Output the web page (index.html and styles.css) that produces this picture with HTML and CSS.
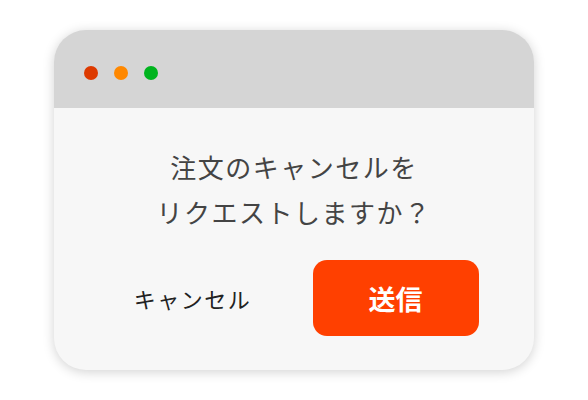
FILE: index.html
```html
<!DOCTYPE html>
<html lang="ja">
<head>
<meta charset="utf-8">
<link rel="stylesheet" href="styles.css">
</head>
<body>
<div class="window">
  <div class="titlebar">
    <span class="dot red"></span>
    <span class="dot orange"></span>
    <span class="dot green"></span>
  </div>
  <div class="content">
    <p class="message">注文のキャンセルを<br>リクエストしますか？</p>
    <div class="actions">
      <button class="btn cancel">キャンセル</button>
      <button class="btn send">送信</button>
    </div>
  </div>
</div>
</body>
</html>
```
FILE: styles.css
```css
html, body {
  margin: 0;
  padding: 0;
  background: #ffffff;
}
body {
  width: 588px;
  height: 400px;
  padding-top: 30px;
  box-sizing: border-box;
  font-family: "Noto Sans CJK JP", "Noto Sans", sans-serif;
}
.window {
  width: 480px;
  height: 340px;
  margin: 0 auto;
  border-radius: 32px;
  overflow: hidden;
  background: #f7f7f7;
  box-shadow: 0 2px 12px rgba(0, 0, 0, 0.18);
  display: flex;
  flex-direction: column;
}
.titlebar {
  height: 78px;
  background: #d5d5d5;
  display: flex;
  align-items: center;
  gap: 16px;
  padding-left: 30px;
  padding-top: 8px;
  box-sizing: border-box;
}
.dot {
  width: 14px;
  height: 14px;
  border-radius: 50%;
}
.red { background: #dd3a00; }
.orange { background: #ff8800; }
.green { background: #00b41e; }
.content {
  flex: 1;
  display: flex;
  flex-direction: column;
  align-items: center;
  padding-top: 36px;
}
.message {
  margin: 0;
  text-align: center;
  font-size: 26px;
  line-height: 45px;
  letter-spacing: 1.5px;
  color: #444444;
}
.actions {
  display: flex;
  gap: 37px;
  margin-top: 26px;
}
.btn {
  width: 166px;
  height: 76px;
  border: none;
  border-radius: 14px;
  font-family: inherit;
  padding: 0;
}
.cancel {
  background: transparent;
  color: #222222;
  font-size: 22px;
  letter-spacing: 1.5px;
}
.send {
  background: #ff4000;
  color: #ffffff;
  font-size: 27px;
  font-weight: bold;
}
```
